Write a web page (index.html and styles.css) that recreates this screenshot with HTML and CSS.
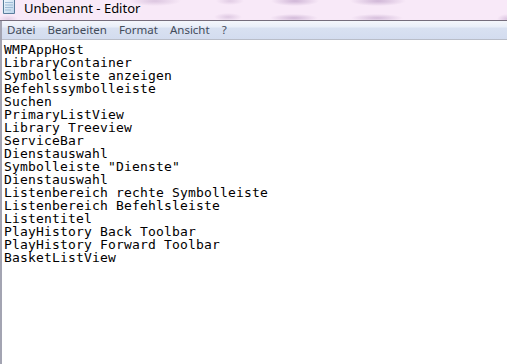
FILE: index.html
```html
<!DOCTYPE html>
<html lang="de">
<head>
<meta charset="utf-8">
<title>Unbenannt - Editor</title>
<link rel="stylesheet" href="styles.css">
</head>
<body>
<div class="window">
  <div class="titlebar">
    <svg class="app-icon" width="16" height="14" viewBox="0 0 16 14" aria-hidden="true">
      <defs>
        <linearGradient id="pg" x1="0" y1="0" x2="1" y2="1">
          <stop offset="0" stop-color="#f2f8fd"/>
          <stop offset="1" stop-color="#b9d3ea"/>
        </linearGradient>
      </defs>
      <path d="M2.5 -1 H13.5 V13.5 H2.5 Z" fill="url(#pg)" stroke="#5b7c9c" stroke-width="1"/>
      <path d="M4 2.5 H12 M4 5 H12 M4 7.5 H12 M4 10 H10" stroke="#9fbbd6" stroke-width="1"/>
      <path d="M1.5 -1 V13.5" stroke="#e8eef5" stroke-width="1"/>
    </svg>
    <span class="title">Unbenannt - Editor</span>
  </div>
  <div class="frame">
    <nav class="menubar">
      <span class="menu-item">Datei</span>
      <span class="menu-item">Bearbeiten</span>
      <span class="menu-item">Format</span>
      <span class="menu-item">Ansicht</span>
      <span class="menu-item">?</span>
    </nav>
    <pre class="editor">WMPAppHost
LibraryContainer
Symbolleiste anzeigen
Befehlssymbolleiste
Suchen
PrimaryListView
Library Treeview
ServiceBar
Dienstauswahl
Symbolleiste "Dienste"
Dienstauswahl
Listenbereich rechte Symbolleiste
Listenbereich Befehlsleiste
Listentitel
PlayHistory Back Toolbar
PlayHistory Forward Toolbar
BasketListView</pre>
  </div>
</div>
</body>
</html>
```

FILE: styles.css
```css
html, body {
  margin: 0;
  padding: 0;
  background: #ffffff;
}

.window {
  display: flex;
  flex-direction: column;
  height: 100vh;
  overflow: hidden;
}

.titlebar {
  height: 20px;
  flex: none;
  display: flex;
  align-items: flex-start;
  border-bottom: 1px solid #756d7c;
  background-color: #f8e9f8;
  background-image:
    radial-gradient(ellipse 26px 5px at 155px 1px, rgba(196,168,204,0.55), rgba(196,168,204,0) 100%),
    radial-gradient(ellipse 14px 4px at 230px 1px, rgba(196,168,204,0.45), rgba(196,168,204,0) 100%),
    radial-gradient(ellipse 24px 5px at 295px 1px, rgba(190,160,200,0.7), rgba(190,160,200,0) 100%),
    radial-gradient(ellipse 28px 5px at 378px 1px, rgba(190,160,200,0.7), rgba(190,160,200,0) 100%),
    radial-gradient(ellipse 14px 4px at 228px 17px, rgba(196,168,204,0.5), rgba(196,168,204,0) 100%),
    radial-gradient(ellipse 24px 4px at 294px 18px, rgba(190,160,200,0.65), rgba(190,160,200,0) 100%),
    radial-gradient(ellipse 26px 4px at 377px 18px, rgba(190,160,200,0.6), rgba(190,160,200,0) 100%),
    radial-gradient(ellipse 10px 4px at 8px 19px, rgba(196,168,204,0.4), rgba(196,168,204,0) 100%),
    radial-gradient(ellipse 10px 5px at 507px 19px, rgba(190,160,200,0.5), rgba(190,160,200,0) 100%);
}

.app-icon {
  display: block;
  flex: none;
  margin-left: 1px;
}

.title {
  margin-left: 7px;
  font-family: "Noto Sans", "Open Sans", sans-serif;
  font-size: 13px;
  line-height: 16px;
  color: #000000;
  letter-spacing: 0;
  text-shadow: 0 0 6px rgba(255,255,255,0.9);
}

.frame {
  flex: 1;
  display: flex;
  flex-direction: column;
  border-left: 2px solid #a3a4b2;
  min-height: 0;
}

.menubar {
  height: 18px;
  flex: none;
  display: flex;
  align-items: center;
  padding-left: 0;
  border-bottom: 1px solid #b9bdc8;
  background: linear-gradient(#f4f6fb 0px, #e9eef8 6px, #d9e1f1 7px, #d3dcef 18px);
  font-family: "Noto Sans", "Open Sans", sans-serif;
  font-size: 11.5px;
  color: #434c5a;
}

.menu-item {
  padding: 0 6px;
  line-height: 18px;
}

.menu-item:first-child {
  padding-left: 5px;
}

.editor {
  flex: 1;
  margin: 0;
  padding: 3px 0 0 2px;
  font-family: "DejaVu Sans Mono", monospace;
  font-size: 13px;
  line-height: 13px;
  letter-spacing: 0.17px;
  color: #000000;
  background: #ffffff;
  overflow: hidden;
}
```
